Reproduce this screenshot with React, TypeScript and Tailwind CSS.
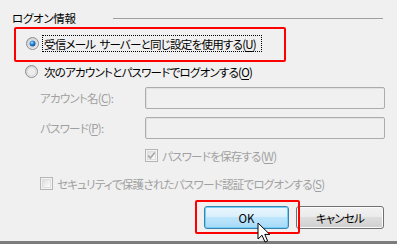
import React from "react";

const font = "[font-family:'Noto_Sans_CJK_JP','Noto_Sans',sans-serif] [font-feature-settings:'palt']";

function Radio({ checked }: { checked?: boolean }) {
  return (
    <svg width="13" height="13" viewBox="0 0 13 13" className="shrink-0">
      <defs>
        <linearGradient id={checked ? "rg1" : "rg2"} x1="0" y1="0" x2="1" y2="1">
          <stop offset="0" stopColor="#c8c8c8" />
          <stop offset="1" stopColor="#ffffff" />
        </linearGradient>
        <radialGradient id="dot" cx="0.4" cy="0.35" r="0.7">
          <stop offset="0" stopColor="#a9e0ff" />
          <stop offset="0.45" stopColor="#2e8ad8" />
          <stop offset="1" stopColor="#0b3f86" />
        </radialGradient>
      </defs>
      <circle cx="6.5" cy="6.5" r="6" fill={`url(#${checked ? "rg1" : "rg2"})`} stroke="#8d8d8d" strokeWidth="1" />
      <circle cx="6.5" cy="6.5" r="4.4" fill="#ececec" stroke="#d2d2d2" strokeWidth="0.8" />
      {checked && <circle cx="6.5" cy="6.5" r="3" fill="url(#dot)" />}
    </svg>
  );
}

function Check({ checked }: { checked?: boolean }) {
  return (
    <svg width="13" height="13" viewBox="0 0 13 13" className="shrink-0">
      <defs>
        <linearGradient id="cg" x1="0" y1="0" x2="1" y2="1">
          <stop offset="0" stopColor="#dcdcdc" />
          <stop offset="1" stopColor="#ffffff" />
        </linearGradient>
      </defs>
      <rect x="0.5" y="0.5" width="12" height="12" fill="#f4f4f4" stroke="#b5b5b5" />
      <rect x="2.5" y="2.5" width="8" height="8" fill="url(#cg)" stroke="#dedede" />
      {checked && (
        <path d="M3.2 6.6 L5.4 9 L9.8 3.4" fill="none" stroke="#a8a8a8" strokeWidth="1.6" />
      )}
    </svg>
  );
}

function U({ children }: { children: React.ReactNode }) {
  return <span className="underline underline-offset-2">{children}</span>;
}

export default function App() {
  return (
    <div className={`relative w-[397px] h-[244px] bg-[#f0f0f0] overflow-hidden flex flex-col text-[11.5px] tracking-[-0.75px] leading-[16px] text-black whitespace-nowrap ${font}`}>
      {/* group header */}
      <div className="mt-[10px] h-[16px] flex items-center pl-[12px] pr-[14px]">
        <div className="w-[101px] shrink-0 tracking-[-0.3px]">ログオン情報</div>
        <div className="flex-1 h-px bg-[#a0a0a0]" />
      </div>

      {/* radio 1 */}
      <div className="mt-[9px] h-[17px] flex items-center pl-[26px]">
        <Radio checked />
        <div className="ml-[3px] h-[17px] w-[220px] flex items-center px-[2px] outline-1 outline-dotted outline-black -outline-offset-1">
          受信メール<span className="ml-[4px]">サーバーと同じ設定を使用する(<U>U</U>)</span>
        </div>
      </div>

      {/* radio 2 */}
      <div className="mt-[11px] h-[17px] flex items-center pl-[25px]">
        <Radio />
        <div className="ml-[4px] px-[2px]">次のアカウントとパスワードでログオンする(<U>O</U>)</div>
      </div>

      {/* account */}
      <div className="mt-[7px] h-[22px] flex items-center pl-[40px] pr-[12px] text-[#a0a0a0]">
        <div className="w-[105px] shrink-0">アカウント名(<U>C</U>):</div>
        <div className="flex-1 h-[22px] border border-[#acacac] rounded-[2px] shadow-[inset_1px_1px_0_#e2e2e2]" />
      </div>

      {/* password */}
      <div className="mt-[8px] h-[22px] flex items-center pl-[40px] pr-[12px] text-[#a0a0a0]">
        <div className="w-[105px] shrink-0">パスワード(<U>P</U>):</div>
        <div className="flex-1 h-[22px] border border-[#acacac] rounded-[2px] shadow-[inset_1px_1px_0_#e2e2e2]" />
      </div>

      {/* save pw */}
      <div className="mt-[10px] h-[13px] flex items-center pl-[145px] text-[#a0a0a0]">
        <Check checked />
        <div className="ml-[4px]">パスワードを保存する(<U>W</U>)</div>
      </div>

      {/* security */}
      <div className="mt-[15px] h-[13px] flex items-center pl-[40px] text-[#a0a0a0]">
        <Check />
        <div className="ml-[4px]">セキュリティで保護されたパスワード認証でログオンする(<U>S</U>)</div>
      </div>

      {/* buttons */}
      <div className="mt-[16px] h-[23px] flex justify-end pr-[13px] gap-[7px]">
        <div className="w-[85px] h-[23px] rounded-[3px] border border-[#3c7fb1] shadow-[inset_0_0_0_1px_#6fd0f8] bg-[linear-gradient(#eaf6fd_0%,#d9f0fc_45%,#bee6fd_50%,#a7d9f5_100%)] flex items-center justify-center tracking-normal">
          OK
        </div>
        <div className="w-[88px] h-[23px] rounded-[3px] border border-[#707070] shadow-[inset_0_0_0_1px_#fcfcfc] bg-[linear-gradient(#f2f2f2_0%,#ebebeb_45%,#dddddd_50%,#cfcfcf_100%)] flex items-center justify-center">
          キャンセル
        </div>
      </div>

      <div className="mt-auto h-[3px] bg-[#7c7c7c]" />

      {/* annotation overlays */}
      <div className="absolute left-[14px] top-[27px] w-[272px] h-[35px] border-2 border-[#ff0000] rounded-[2px]" />
      <div className="absolute left-[195px] top-[200px] w-[105px] h-[34px] border-2 border-[#ff0000] rounded-[2px]" />

      {/* cursor */}
      <svg className="absolute left-[257px] top-[222px]" width="14" height="22" viewBox="0 0 14 22">
        <path d="M1 1 L1 17 L5 13.2 L8 20 L10.6 18.9 L7.8 12.4 L12.8 12.4 Z" fill="#ffffff" stroke="#000000" strokeWidth="1" strokeLinejoin="miter" />
      </svg>
    </div>
  );
}
